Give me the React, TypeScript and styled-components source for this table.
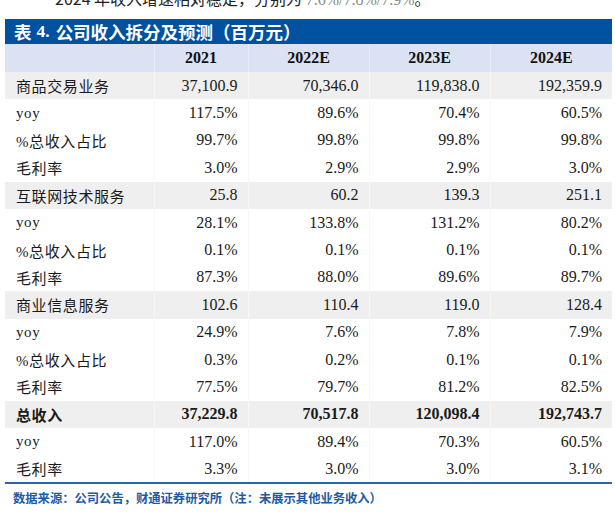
import React from 'react';
import styled, { createGlobalStyle } from 'styled-components';

const GlobalStyle = createGlobalStyle`
  html, body {
    margin: 0;
    padding: 0;
    background: #ffffff;
    overflow: hidden;
  }
`;

const Page = styled.div`
  width: 615px;
  height: 515px;
  overflow: hidden;
  padding-left: 5px;
  box-sizing: border-box;
`;

const Lead = styled.p`
  margin: -13px 0 0 50px;
  height: 22px;
  line-height: 22px;
  font-family: "Noto Sans CJK SC", sans-serif;
  font-size: 16px;
  color: #222;
  white-space: nowrap;
`;

const LeadNum = styled.span`
  font-family: "Liberation Serif", serif;
  color: #8a8a8a;
`;

const TitleBar = styled.div`
  margin-top: 10px;
  width: 607px;
  height: 25px;
  background: #0151a1;
  color: #ffffff;
  display: flex;
  align-items: center;
  padding-left: 9px;
  box-sizing: border-box;
  font-family: "Noto Sans CJK SC", sans-serif;
  font-weight: 700;
  font-size: 17.5px;
  white-space: nowrap;
`;

const TitleNum = styled.span`
  font-family: "Liberation Serif", serif;
  margin: 0 6px 0 5px;
`;

const Table = styled.table`
  width: 607px;
  border-collapse: collapse;
  table-layout: fixed;
  border-bottom: 2px solid #2c64a9;
`;

const HeadRow = styled.tr`
  height: 28px;
  background: #dbe2f3;
`;

const HeadCell = styled.th`
  padding: 0;
  text-align: center;
  font-family: "Liberation Serif", serif;
  font-weight: 700;
  font-size: 16px;
  color: #111;
  border-left: 1px solid #e8ecf7;
  &:first-child {
    border-left: none;
  }
`;

const Row = styled.tr<{ $shade: boolean }>`
  height: 27.4px;
  background: ${p => (p.$shade ? '#efefef' : '#ffffff')};
`;

const Label = styled.td<{ $bold: boolean }>`
  padding: 0 0 0 11px;
  font-family: "Liberation Serif", "Noto Sans CJK SC", serif;
  font-size: 15px;
  letter-spacing: 0.6px;
  font-weight: ${p => (p.$bold ? 700 : 400)};
  color: #1a1a1a;
  white-space: nowrap;
`;

const Num = styled.td<{ $bold: boolean }>`
  padding: 0 10px 0 0;
  text-align: right;
  font-family: "Liberation Serif", serif;
  font-size: 16px;
  font-weight: ${p => (p.$bold ? 700 : 400)};
  color: #1a1a1a;
  border-left: 1px solid #f7f7f7;
  white-space: nowrap;
`;

const Source = styled.div`
  margin: 5px 0 0 8px;
  font-family: "Noto Sans CJK SC", sans-serif;
  font-weight: 700;
  font-size: 12.3px;
  color: #1d5aa6;
  white-space: nowrap;
`;

type DataRow = { label: string; values: string[]; shade?: boolean; bold?: boolean };

const rows: DataRow[] = [
  { label: '商品交易业务', values: ['37,100.9', '70,346.0', '119,838.0', '192,359.9'], shade: true },
  { label: 'yoy', values: ['117.5%', '89.6%', '70.4%', '60.5%'] },
  { label: '%总收入占比', values: ['99.7%', '99.8%', '99.8%', '99.8%'] },
  { label: '毛利率', values: ['3.0%', '2.9%', '2.9%', '3.0%'] },
  { label: '互联网技术服务', values: ['25.8', '60.2', '139.3', '251.1'], shade: true },
  { label: 'yoy', values: ['28.1%', '133.8%', '131.2%', '80.2%'] },
  { label: '%总收入占比', values: ['0.1%', '0.1%', '0.1%', '0.1%'] },
  { label: '毛利率', values: ['87.3%', '88.0%', '89.6%', '89.7%'] },
  { label: '商业信息服务', values: ['102.6', '110.4', '119.0', '128.4'], shade: true },
  { label: 'yoy', values: ['24.9%', '7.6%', '7.8%', '7.9%'] },
  { label: '%总收入占比', values: ['0.3%', '0.2%', '0.1%', '0.1%'] },
  { label: '毛利率', values: ['77.5%', '79.7%', '81.2%', '82.5%'] },
  { label: '总收入', values: ['37,229.8', '70,517.8', '120,098.4', '192,743.7'], shade: true, bold: true },
  { label: 'yoy', values: ['117.0%', '89.4%', '70.3%', '60.5%'] },
  { label: '毛利率', values: ['3.3%', '3.0%', '3.0%', '3.1%'] },
];

const years = ['2021', '2022E', '2023E', '2024E'];
const colWidths = [149, 94, 121, 121, 122];

export default function App() {
  return (
    <Page>
      <GlobalStyle />
      <Lead>
        2024 年收入增速相对稳定，分别为 <LeadNum>7.6%/7.8%/7.9%</LeadNum>。
      </Lead>
      <TitleBar>
        表<TitleNum>4.</TitleNum>公司收入拆分及预测（百万元）
      </TitleBar>
      <Table>
        <colgroup>
          {colWidths.map((w, i) => (
            <col key={i} style={{ width: w }} />
          ))}
        </colgroup>
        <thead>
          <HeadRow>
            <HeadCell />
            {years.map(y => (
              <HeadCell key={y}>{y}</HeadCell>
            ))}
          </HeadRow>
        </thead>
        <tbody>
          {rows.map((r, i) => (
            <Row key={i} $shade={!!r.shade}>
              <Label $bold={!!r.bold}>{r.label}</Label>
              {r.values.map((v, j) => (
                <Num key={j} $bold={!!r.bold}>{v}</Num>
              ))}
            </Row>
          ))}
        </tbody>
      </Table>
      <Source>数据来源：公司公告，财通证券研究所（注：未展示其他业务收入）</Source>
    </Page>
  );
}
